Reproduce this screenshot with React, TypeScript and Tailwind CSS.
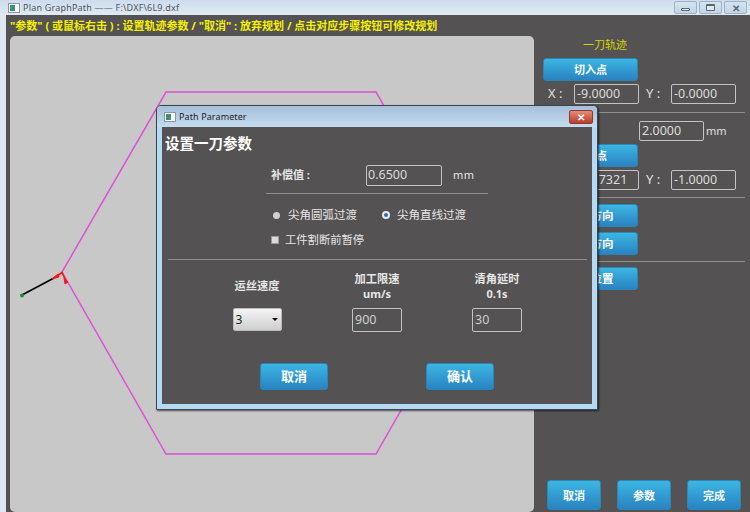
const font = { cjk: "font-['Noto_Sans','Noto_Sans_CJK_SC',sans-serif]" };

function BlueButton({ label, className = "" }: { label: string; className?: string }) {
  return (
    <button className={"flex items-center justify-center rounded-[3px] border border-[#2a86b8] bg-gradient-to-b from-[#3cb6e2] to-[#2a83c2] text-white font-bold leading-none " + className}>
      {label}
    </button>
  );
}

function Field({ value, className = "" }: { value: string; className?: string }) {
  return (
    <div className={"flex items-center border border-[#c4c4c4] rounded-[2px] pl-[2px] text-[#dcdcdc] text-[12.5px] leading-none overflow-hidden whitespace-nowrap " + className}>
      {value}
    </div>
  );
}

function CaptionButton({ kind }: { kind: "min" | "max" | "close" }) {
  return (
    <div className="flex h-[13px] w-[23px] items-center justify-center rounded-[2px] border border-[#9db2c6] bg-gradient-to-b from-[#d6e4f0] to-[#c2d5e6]">
      {kind === "min" && <div className="mt-[3px] h-[3px] w-[9px] rounded-[1px] border border-[#5a6672] bg-[#eef3f8]" />}
      {kind === "max" && <div className="h-[7px] w-[9px] rounded-[1px] border border-[#5a6672] border-t-2 bg-[#dfe8f0]" />}
      {kind === "close" && <span className="text-[10px] font-bold leading-none text-[#5a6672]">✕</span>}
    </div>
  );
}

function AppIcon() {
  return (
    <div className="flex h-[10px] w-[12px] border border-[#8a98a6] bg-white">
      <div className="mt-[1px] ml-[1px] h-[6px] w-[5px] bg-[#3d8f7d]" />
    </div>
  );
}

function Divider({ className = "" }: { className?: string }) {
  return <div className={"h-[1px] bg-[#8f8f8f] " + className} />;
}

function Canvas() {
  return (
    <div className="h-[476px] w-[524px] shrink-0 rounded-[5px] bg-[#c8c8c8]">
      <svg viewBox="10 36 524 476" className="block h-full w-full">
        <polygon points="166,92 376,92 480,272 376,454 166,454 62,272" fill="none" stroke="#df4fd8" strokeWidth="1.5" />
        <line x1="22" y1="295" x2="54" y2="278" stroke="#000" strokeWidth="1.6" />
        <circle cx="22" cy="295.5" r="2" fill="#1f8a3a" />
        <path d="M54 278 L62 272.5 L66 281" fill="none" stroke="#f01818" strokeWidth="1.6" />
        <path d="M52 279 L58 274 L59 277 Z M64 278 L68 282 L65 284 Z" fill="#f01818" stroke="#f01818" />
      </svg>
    </div>
  );
}

function SidePanel() {
  return (
    <div className="flex h-[476px] flex-1 flex-col pl-[1px] text-[#e0e0e0]">
      <div className="h-[18px] w-[140px] text-center text-[11px] leading-[18px] text-[#d4d400]">一刀轨迹</div>
      <div className="ml-[8px] mt-[4px]">
        <BlueButton label="切入点" className="h-[23px] w-[95px] text-[11px]" />
        <div className="mt-[3px] flex h-[20px] items-center">
          <span className="ml-[5px] w-[26px] text-[13px]">X :</span>
          <Field value="-9.0000" className="h-[20px] w-[65px]" />
          <span className="ml-[7px] w-[25px] text-[13px]">Y :</span>
          <Field value="-0.0000" className="h-[20px] w-[65px]" />
        </div>
      </div>
      <Divider className="mt-[8px] mr-[5px]" />
      <div className="ml-[8px] mt-[8px]">
        <div className="flex h-[20px] items-center">
          <span className="w-[96px] text-[13px]">步长 :</span>
          <Field value="2.0000" className="h-[20px] w-[65px]" />
          <span className="ml-[2px] text-[11px]">mm</span>
        </div>
        <BlueButton label="切出点" className="mt-[3px] h-[23px] w-[95px] text-[11px]" />
        <div className="mt-[3px] flex h-[20px] items-center">
          <span className="ml-[5px] w-[26px] text-[13px]">X :</span>
          <Field value="-11.7321" className="h-[20px] w-[65px]" />
          <span className="ml-[7px] w-[25px] text-[13px]">Y :</span>
          <Field value="-1.0000" className="h-[20px] w-[65px]" />
        </div>
      </div>
      <Divider className="mt-[7px] mr-[5px]" />
      <div className="ml-[8px] mt-[6px] flex flex-col gap-[5px]">
        <BlueButton label="切入方向" className="h-[23px] w-[95px] text-[11.5px]" />
        <BlueButton label="切出方向" className="h-[23px] w-[95px] text-[11.5px]" />
      </div>
      <Divider className="mt-[6px] mr-[5px]" />
      <BlueButton label="起点位置" className="ml-[8px] mt-[5px] h-[23px] w-[95px] text-[11.5px]" />
      <div className="mt-auto mb-[2px] ml-[12px] flex gap-[16px]">
        <BlueButton label="取消" className="h-[30px] w-[54px] text-[11px]" />
        <BlueButton label="参数" className="h-[30px] w-[54px] text-[11px]" />
        <BlueButton label="完成" className="h-[30px] w-[54px] text-[11px]" />
      </div>
    </div>
  );
}

function ParamDialog() {
  return (
    <div className="absolute left-[156px] top-[105px] h-[305px] w-[442px] rounded-t-[5px] border border-[#3d4650] bg-[#b4d9f2] px-[5px] pb-[5px] shadow-[1px_1px_2px_rgba(0,0,0,0.6)]">
      <div className="-mx-[5px] flex h-[21px] items-center rounded-t-[4px] bg-gradient-to-b from-[#a5bfdc] to-[#c5dcee] pl-[7px] pr-[4px]">
        <AppIcon />
        <span className="ml-[3px] text-[9px] tracking-[0.1px] text-[#222]">Path Parameter</span>
        <div className="ml-auto flex h-[14px] w-[24px] items-center justify-center rounded-[2px] border border-[#8d3a30] bg-gradient-to-b from-[#e88a78] to-[#b83a2c]">
          <span className="text-[10px] font-bold leading-none text-white">✕</span>
        </div>
      </div>
      <div className="flex h-[277px] flex-col bg-[#545252] text-[#e6e6e6]">
        <h2 className="ml-[3px] mt-[5px] text-[14.5px] font-bold leading-[22px] text-white">设置一刀参数</h2>
        <div className="mt-[11px] flex h-[21px] items-center pl-[109px]">
          <span className="w-[95px] text-[11px] font-bold">补偿值 :</span>
          <Field value="0.6500" className="h-[21px] w-[76px] !pl-[1px]" />
          <span className="ml-[11px] text-[11px] tracking-[0.5px]">mm</span>
        </div>
        <Divider className="ml-[104px] mt-[7px] w-[222px]" />
        <div className="mt-[13px] flex h-[16px] items-center pl-[111px] text-[11.5px]">
          <span className="h-[7px] w-[7px] rounded-full bg-[#d0d0d0]" />
          <span className="ml-[8px] w-[69px]">尖角圆弧过渡</span>
          <span className="ml-[25px] flex h-[8px] w-[8px] items-center justify-center rounded-full bg-[#e4eef6]">
            <span className="h-[4px] w-[4px] rounded-full bg-[#2a6ea8]" />
          </span>
          <span className="ml-[7px]">尖角直线过渡</span>
        </div>
        <div className="mt-[9px] flex h-[16px] items-center pl-[109px] text-[11.3px]">
          <span className="h-[8px] w-[8px] border border-[#999] bg-[#dcdcdc]" />
          <span className="ml-[6px]">工件割断前暂停</span>
        </div>
        <Divider className="ml-[6px] mt-[11px] w-[419px]" />
        <div className="ml-[35px] grid w-[360px] grid-cols-3">
          <div className="flex flex-col items-center">
            <div className="mt-[18px] flex h-[16px] items-center text-[11.25px] font-bold">运丝速度</div>
            <div className="mt-[14px] flex h-[23px] w-[49px] items-center justify-between rounded-[2px] border border-[#bbb] bg-gradient-to-b from-[#f4f4f4] to-[#cfcfcf] px-[2px] text-[12px] text-[#222]">
              3
              <span className="mr-[1px] h-0 w-0 border-x-[3px] border-t-[3px] border-x-transparent border-t-black" />
            </div>
          </div>
          <div className="flex flex-col items-center">
            <div className="mt-[11px] flex h-[16px] items-center text-[11.25px] font-bold">加工限速</div>
            <div className="flex h-[14px] items-center text-[11px] font-bold">um/s</div>
            <Field value="900" className="mt-[7px] h-[24px] w-[50px] !text-[#cfcfcf]" />
          </div>
          <div className="flex flex-col items-center">
            <div className="mt-[11px] flex h-[16px] items-center text-[11.25px] font-bold">清角延时</div>
            <div className="flex h-[14px] items-center text-[11px] font-bold">0.1s</div>
            <Field value="30" className="mt-[7px] h-[24px] w-[50px] !text-[#cfcfcf]" />
          </div>
        </div>
        <div className="ml-[98px] mt-[31px] flex gap-[98px]">
          <BlueButton label="取消" className="h-[27px] w-[68px] text-[13px]" />
          <BlueButton label="确认" className="h-[27px] w-[68px] text-[13px]" />
        </div>
      </div>
    </div>
  );
}

export default function App() {
  return (
    <div className={"relative flex h-[512px] w-[750px] flex-col overflow-hidden bg-[#dce7f2] " + font.cjk}>
      <div className="flex h-[15px] shrink-0 items-center bg-gradient-to-b from-[#cddcec] to-[#dfeaf4] pl-[8px] pr-[3px]">
        <AppIcon />
        <span className="ml-[3px] text-[9px] tracking-[0.2px] text-[#555]">Plan GraphPath —— F:\DXF\6L9.dxf</span>
        <div className="ml-auto flex gap-[2px]">
          <CaptionButton kind="min" />
          <CaptionButton kind="max" />
          <CaptionButton kind="close" />
        </div>
      </div>
      <div className="ml-[6px] flex min-h-0 flex-1 flex-col bg-[#545252]">
        <div className="flex h-[21px] shrink-0 items-center pb-[1px] pl-[4px] text-[11px] font-bold leading-none whitespace-pre text-[#f5f000]">
          {'"参数" ( 或鼠标右击 ) : 设置轨迹参数 / "取消" : 放弃规划 / 点击对应步骤按钮可修改规划'}
        </div>
        <div className="flex min-h-0 flex-1 pl-[4px]">
          <Canvas />
          <SidePanel />
        </div>
      </div>
      <ParamDialog />
    </div>
  );
}
